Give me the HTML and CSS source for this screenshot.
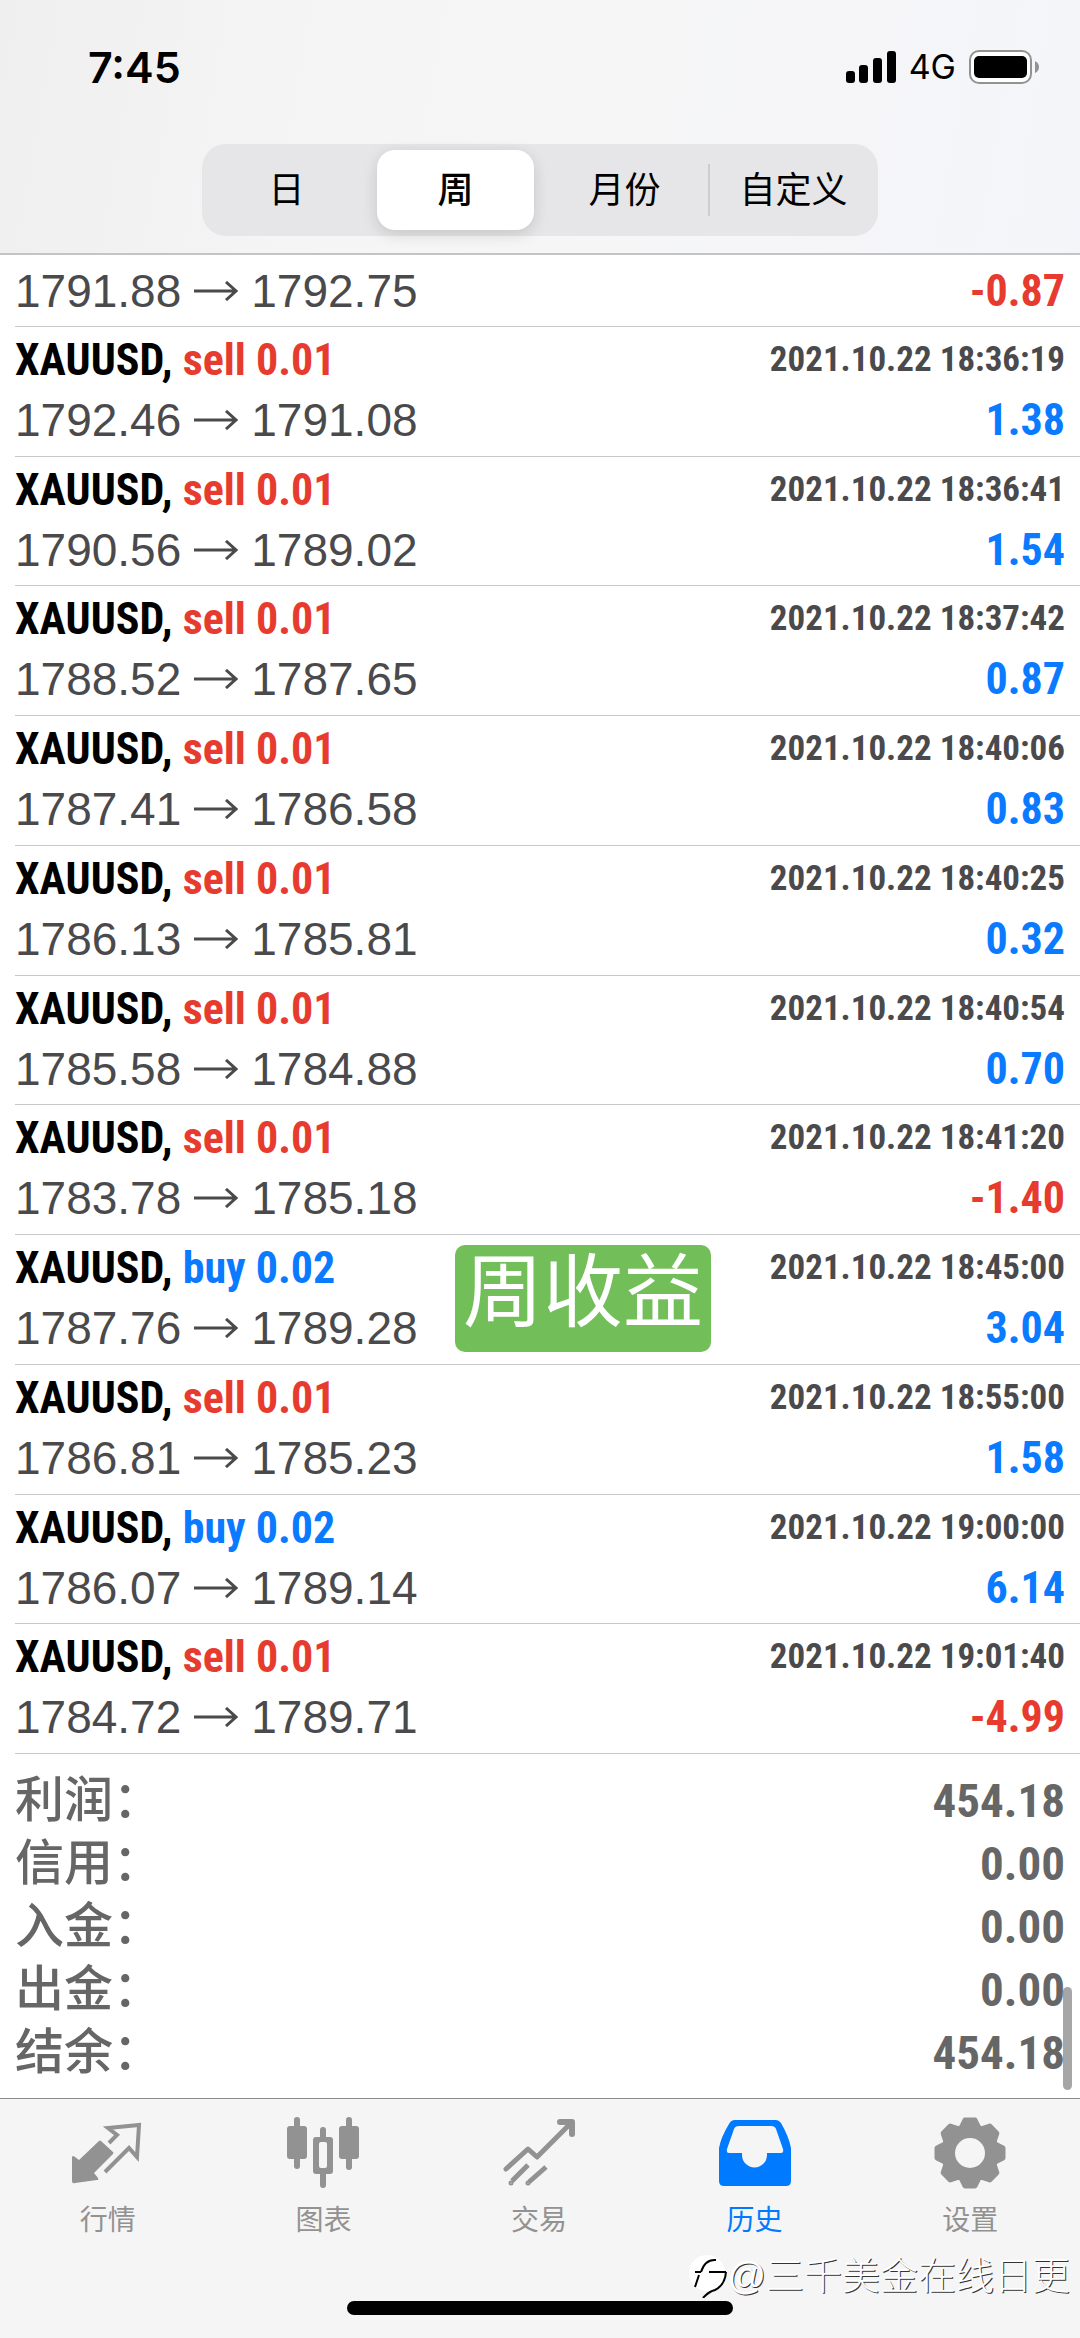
FILE: index.html
```html
<!DOCTYPE html>
<html lang="zh-CN">
<head>
<meta charset="utf-8">
<meta name="viewport" content="width=device-width, initial-scale=1">
<title>历史</title>
<link rel="stylesheet" href="styles.css">
</head>
<body>
<svg class="defs" aria-hidden="true">
  <symbol id="arrow" viewBox="0 0 44 20"><path d="M0 10H42M32 1L42 10L32 19" fill="none" stroke="currentColor" stroke-width="3"/></symbol>
</svg>

<header class="top">
  <div class="status">
    <time class="clock">7:45</time>
    <div class="signals">
      <svg width="50" height="32" viewBox="0 0 50 32" aria-hidden="true"><rect x="0" y="20" width="9" height="12" rx="3"/><rect x="13" y="14" width="9" height="18" rx="3"/><rect x="27" y="7" width="9" height="25" rx="3"/><rect x="41" y="0" width="9" height="32" rx="3"/></svg>
      <span class="network">4G</span>
      <svg width="70" height="34" viewBox="0 0 70 34" aria-hidden="true"><rect x="1" y="1" width="61" height="32" rx="9" fill="#fff" stroke="#929292" stroke-width="2"/><rect x="5" y="6" width="53" height="22" rx="5"/><path d="M66 11Q70 13 70 17T66 23Z" fill="#929292"/></svg>
    </div>
  </div>
  <nav class="segments" aria-label="时间范围">
    <button class="segment" type="button">日</button>
    <button class="segment selected" type="button" aria-pressed="true">周</button>
    <button class="segment" type="button">月份</button>
    <button class="segment divided" type="button">自定义</button>
  </nav>
</header>

<main class="history">
  <ul class="deals">
    <li class="deal partial">
      <div class="line"><span class="price">1791.88<svg class="arrow"><use href="#arrow"/></svg>1792.75</span><b class="profit loss">-0.87</b></div>
    </li>
    <li class="deal">
      <div class="line"><b class="symbol">XAUUSD, <span class="sell">sell 0.01</span></b><time class="date">2021.10.22 18:36:19</time></div>
      <div class="line"><span class="price">1792.46<svg class="arrow"><use href="#arrow"/></svg>1791.08</span><b class="profit">1.38</b></div>
    </li>
    <li class="deal">
      <div class="line"><b class="symbol">XAUUSD, <span class="sell">sell 0.01</span></b><time class="date">2021.10.22 18:36:41</time></div>
      <div class="line"><span class="price">1790.56<svg class="arrow"><use href="#arrow"/></svg>1789.02</span><b class="profit">1.54</b></div>
    </li>
    <li class="deal">
      <div class="line"><b class="symbol">XAUUSD, <span class="sell">sell 0.01</span></b><time class="date">2021.10.22 18:37:42</time></div>
      <div class="line"><span class="price">1788.52<svg class="arrow"><use href="#arrow"/></svg>1787.65</span><b class="profit">0.87</b></div>
    </li>
    <li class="deal">
      <div class="line"><b class="symbol">XAUUSD, <span class="sell">sell 0.01</span></b><time class="date">2021.10.22 18:40:06</time></div>
      <div class="line"><span class="price">1787.41<svg class="arrow"><use href="#arrow"/></svg>1786.58</span><b class="profit">0.83</b></div>
    </li>
    <li class="deal">
      <div class="line"><b class="symbol">XAUUSD, <span class="sell">sell 0.01</span></b><time class="date">2021.10.22 18:40:25</time></div>
      <div class="line"><span class="price">1786.13<svg class="arrow"><use href="#arrow"/></svg>1785.81</span><b class="profit">0.32</b></div>
    </li>
    <li class="deal">
      <div class="line"><b class="symbol">XAUUSD, <span class="sell">sell 0.01</span></b><time class="date">2021.10.22 18:40:54</time></div>
      <div class="line"><span class="price">1785.58<svg class="arrow"><use href="#arrow"/></svg>1784.88</span><b class="profit">0.70</b></div>
    </li>
    <li class="deal">
      <div class="line"><b class="symbol">XAUUSD, <span class="sell">sell 0.01</span></b><time class="date">2021.10.22 18:41:20</time></div>
      <div class="line"><span class="price">1783.78<svg class="arrow"><use href="#arrow"/></svg>1785.18</span><b class="profit loss">-1.40</b></div>
    </li>
    <li class="deal">
      <div class="line"><b class="symbol">XAUUSD, <span class="buy">buy 0.02</span></b><time class="date">2021.10.22 18:45:00</time></div>
      <div class="line"><span class="price">1787.76<svg class="arrow"><use href="#arrow"/></svg>1789.28</span><b class="profit">3.04</b></div>
      <strong class="sticker">周收益</strong>
    </li>
    <li class="deal">
      <div class="line"><b class="symbol">XAUUSD, <span class="sell">sell 0.01</span></b><time class="date">2021.10.22 18:55:00</time></div>
      <div class="line"><span class="price">1786.81<svg class="arrow"><use href="#arrow"/></svg>1785.23</span><b class="profit">1.58</b></div>
    </li>
    <li class="deal">
      <div class="line"><b class="symbol">XAUUSD, <span class="buy">buy 0.02</span></b><time class="date">2021.10.22 19:00:00</time></div>
      <div class="line"><span class="price">1786.07<svg class="arrow"><use href="#arrow"/></svg>1789.14</span><b class="profit">6.14</b></div>
    </li>
    <li class="deal">
      <div class="line"><b class="symbol">XAUUSD, <span class="sell">sell 0.01</span></b><time class="date">2021.10.22 19:01:40</time></div>
      <div class="line"><span class="price">1784.72<svg class="arrow"><use href="#arrow"/></svg>1789.71</span><b class="profit loss">-4.99</b></div>
    </li>
  </ul>
  <dl class="summary">
    <div class="total"><dt>利润：</dt><dd>454.18</dd></div>
    <div class="total"><dt>信用：</dt><dd>0.00</dd></div>
    <div class="total"><dt>入金：</dt><dd>0.00</dd></div>
    <div class="total"><dt>出金：</dt><dd>0.00</dd></div>
    <div class="total"><dt>结余：</dt><dd>454.18</dd></div>
  </dl>
  <div class="scrollbar"></div>
</main>

<footer class="bottom">
  <nav class="tabs">
    <a class="tab" href="#quotes">
      <svg class="tab-icon" viewBox="0 -6 72 72" aria-hidden="true"><path d="M0 34Q1 32 3 34L7 37L27 18Q28 17 29 18L41 29Q42 30 41 31L22 50L26 55Q27 57 25 57L3 60Q0 61 0 58Z" fill="currentColor"/><path d="M37 20L45 12L36 5L67 2L65 34L57 25L33 49" fill="none" stroke="currentColor" stroke-width="4"/></svg>
      <span>行情</span>
    </a>
    <a class="tab" href="#charts">
      <svg class="tab-icon" viewBox="0 0 72 72" fill="currentColor" aria-hidden="true"><rect x="7" width="6" height="52" rx="3"/><rect y="9" width="20" height="33" rx="3"/><rect x="59" width="6" height="53" rx="3"/><rect x="52" y="9" width="20" height="33" rx="3"/><path d="M33 20V13a3 3 0 0 1 6 0V20H43a3 3 0 0 1 3 3V54a3 3 0 0 1-3 3H39V68a3 3 0 0 1-6 0V57H29a3 3 0 0 1-3-3V23a3 3 0 0 1 3-3ZM34 25a2 2 0 0 0-2 2V49a2 2 0 0 0 2 2H38a2 2 0 0 0 2-2V27a2 2 0 0 0-2-2Z" fill-rule="evenodd"/></svg>
      <span>图表</span>
    </a>
    <a class="tab" href="#trade">
      <svg class="tab-icon" viewBox="0 -2 72 72" fill="none" stroke="currentColor" stroke-width="5" aria-hidden="true"><path d="M3 50L25 30L34 38L67 5" stroke-linejoin="round" stroke-linecap="round"/><path d="M57 3H69V15" stroke-width="6" stroke-linecap="round" stroke-linejoin="round"/><path d="M25 46L9 62M43 48L26 63"/><circle cx="8" cy="64" r="1" stroke-width="3"/><circle cx="25" cy="64" r="1" stroke-width="3"/></svg>
      <span>交易</span>
    </a>
    <a class="tab active" href="#history" aria-current="page">
      <svg class="tab-icon" viewBox="0 -3 72 72" fill="currentColor" aria-hidden="true"><path fill-rule="evenodd" d="M16 0H57Q60 0 62 3Q70 17 72 28V61Q72 66 67 66H5Q0 66 0 61V28Q2 17 10 4Q12 0 16 0ZM20 6Q16 6 15 9L8 29Q7 33 10 33H23V35A12.500 12.500 0 0 0 48 35V33H62Q65 33 64 29L57 9Q56 6 52 6Z"/></svg>
      <span>历史</span>
    </a>
    <a class="tab" href="#settings">
      <svg class="tab-icon" viewBox="-36 -36 72 72" aria-hidden="true">
        <defs><path id="tooth" d="M-9 -25L-5 -33H5L9 -25Z"/></defs>
        <circle r="22" fill="none" stroke="currentColor" stroke-width="14"/>
        <g fill="currentColor" stroke="currentColor" stroke-width="5" stroke-linejoin="round"><use href="#tooth"/><use href="#tooth" transform="rotate(45)"/><use href="#tooth" transform="rotate(90)"/><use href="#tooth" transform="rotate(135)"/><use href="#tooth" transform="rotate(180)"/><use href="#tooth" transform="rotate(225)"/><use href="#tooth" transform="rotate(270)"/><use href="#tooth" transform="rotate(315)"/></g>
      </svg>
      <span>设置</span>
    </a>
  </nav>
  <div class="home-bar"></div>
  <div class="watermark">
    <svg width="38" height="44" viewBox="0 0 38 44" aria-hidden="true"><circle cx="18" cy="19" r="18" fill="#fff"/><path d="M6 18H12M20 18H37" stroke="#000" stroke-width="2"/><path d="M6 33L10 21M12 18Q16 5 27 6M37 18Q36 31 26 36Q19 38 14 44" fill="none" stroke="#000" stroke-width="2"/></svg>
    <span>@三千美金在线日更</span>
  </div>
</footer>
</body>
</html>
```
FILE: styles.css
```css
* {
  box-sizing: border-box;
}

body {
  margin: 0;
  min-height: 100vh;
  display: flex;
  flex-direction: column;
  background: #fff;
  color: #000;
  font-family: "Liberation Sans", "Noto Sans CJK SC", sans-serif;
}

.defs {
  display: none;
}

/* Header */

.top {
  display: flex;
  flex-direction: column;
  align-items: center;
  gap: 44px;
  padding-bottom: 17px;
  border-bottom: 2px solid #c4c3c5;
  background: linear-gradient(100deg, #f0eff0, #f6f5f5 30%, #f6f6f7 60%, #f4f5fa);
}

.status {
  width: 100%;
  height: 100px;
  padding: 34px 41px 0 88px;
  display: flex;
  align-items: center;
  justify-content: space-between;
}

.clock {
  font: 600 43px/66px Inter, sans-serif;
}

.signals {
  display: flex;
  align-items: center;
  gap: 13px;
}

.network {
  font: 400 34px/40px Inter, sans-serif;
}

.segments {
  width: 676px;
  max-width: 100%;
  height: 92px;
  display: flex;
  border-radius: 24px;
  background: #e6e5e7;
}

.segment {
  position: relative;
  flex: 1;
  margin: 6px;
  padding: 2px 0 0;
  border: 0;
  border-radius: 18px;
  background: none;
  color: #000;
  font: 400 36px/48px "Liberation Sans", "Noto Sans CJK SC", sans-serif;
}

.segment.selected {
  background: #fff;
  font-weight: 500;
  box-shadow: 0 4px 16px rgba(0, 0, 0, 0.14);
}

.segment.divided::before {
  content: "";
  position: absolute;
  top: 14px;
  bottom: 14px;
  left: -7px;
  width: 2px;
  background: #cdcccf;
}

/* Deals */

.history {
  position: relative;
  flex: 1;
  display: flex;
  flex-direction: column;
}

.deals {
  flex: 1;
  display: flex;
  flex-direction: column;
  margin: 0;
  padding: 0 0 0 15px;
  list-style: none;
}

.deal {
  position: relative;
  flex: 1;
  padding: 3px 15px 5px 0;
  border-bottom: 1px solid #c8c8ca;
}

.deal.partial {
  flex: none;
  padding-top: 6px;
}

.line {
  height: 60px;
  display: flex;
  align-items: center;
  justify-content: space-between;
  white-space: nowrap;
}

.price {
  display: flex;
  align-items: center;
  gap: 13px;
  color: #4a4a4d;
  font-size: 46px;
  line-height: 60px;
}

.arrow {
  width: 44px;
  height: 20px;
}

.symbol,
.date,
.profit,
.total dd {
  font-family: "Roboto Condensed", "Liberation Sans Narrow", sans-serif;
  font-weight: 700;
  line-height: 60px;
}

.symbol {
  font-size: 44px;
}

.date {
  color: #4a4a4d;
  font-size: 35px;
}

.profit {
  color: #0a7aff;
  font-size: 44px;
}

.buy {
  color: #0a7aff;
}

.sell,
.profit.loss {
  color: #e63b2e;
}

.sticker {
  position: absolute;
  top: 10px;
  left: 440px;
  padding: 0 8px 12px;
  border-radius: 10px;
  background: #72be59;
  color: #fff;
  font: 400 80px/95px "Liberation Sans", "Noto Sans CJK SC", sans-serif;
}

/* Summary */

.summary {
  margin: 0;
  padding: 15px 15px 14px;
}

.total {
  height: 63px;
  display: flex;
  align-items: center;
  justify-content: space-between;
  color: #666;
}

.total dt {
  font: 500 49px/63px "Liberation Sans", "Noto Sans CJK SC", sans-serif;
}

.total dd {
  margin: 0;
  font-size: 47px;
}

.scrollbar {
  position: absolute;
  right: 8px;
  bottom: 8px;
  width: 9px;
  height: 103px;
  border-radius: 5px;
  background: rgba(0, 0, 0, 0.35);
}

/* Tab bar */

.bottom {
  position: relative;
  padding-bottom: 23px;
  border-top: 1px solid #8c8c8c;
  background: #f5f5f5;
}

.tabs {
  display: flex;
  height: 202px;
  padding: 18px 2px 0 0;
}

.tab {
  flex: 1;
  display: flex;
  flex-direction: column;
  align-items: center;
  gap: 11px;
  color: #929292;
  font: 400 28px/36px "Noto Sans CJK SC", sans-serif;
  text-decoration: none;
}

.tab.active {
  color: #007aff;
}

.tab-icon {
  width: 72px;
  height: 72px;
}

.home-bar {
  width: 386px;
  height: 14px;
  margin: 0 auto;
  border-radius: 7px;
  background: #000;
}

.watermark {
  position: absolute;
  right: 10px;
  bottom: 40px;
  display: flex;
  align-items: center;
  color: #fff;
  font: 300 38px/44px "Liberation Sans", "Noto Sans CJK SC", sans-serif;
  text-shadow: 1px 1px 0 #333;
}
```
